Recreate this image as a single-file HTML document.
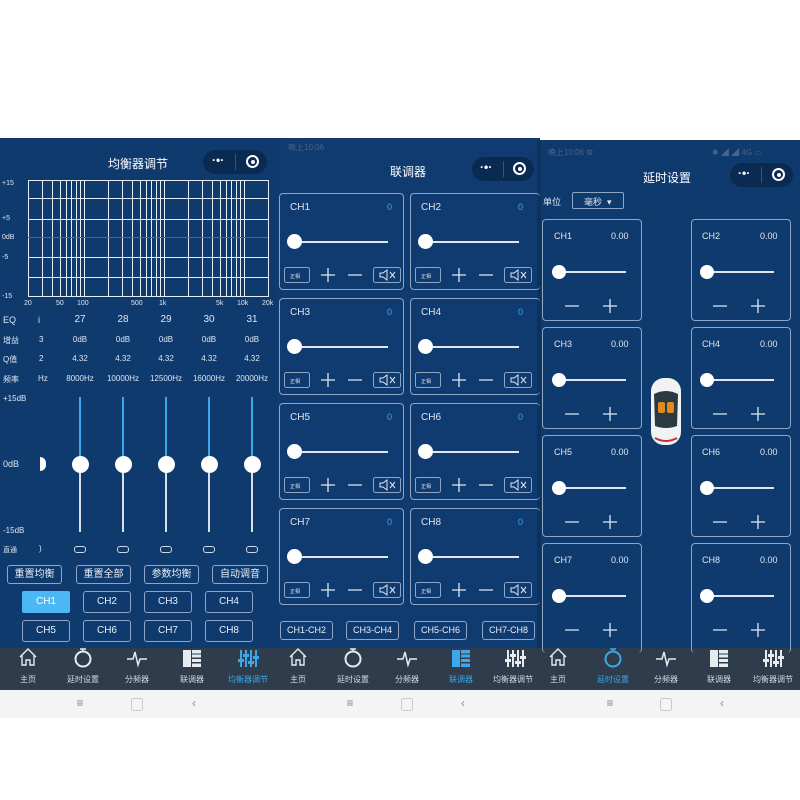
<!DOCTYPE html>
<html><head><meta charset="utf-8"><style>
*{margin:0;padding:0;box-sizing:border-box}
body{width:800px;height:800px;background:#fff;position:relative;overflow:hidden;font-family:"Liberation Sans","Noto Sans CJK SC",sans-serif;color:#e8eef6}
.a{position:absolute}
.bg{background:#0f3a6e}
.nav{background:#2e3c4b;height:42px;top:648px}
.sys{background:#f4f4f4;height:28px;top:690px}
.t{position:absolute;font-size:8px;color:#dfe6f0;white-space:nowrap}
.c{transform:translateX(-50%)}
.cap{position:absolute;background:#0a2a52;border-radius:12px;height:24px}
.bx{position:absolute;border:1px solid #8fa6c4;border-radius:4px}
.btn{position:absolute;border:1px solid #8fa6c4;border-radius:3px;font-size:10px;text-align:center;color:#e8eef6}
.trk{position:absolute;height:2px;background:#dfe6ee}
.knob{position:absolute;border-radius:50%;background:#fff}
.nl{position:absolute;font-size:8px;color:#d5dbe2;transform:translateX(-50%);top:674px;white-space:nowrap}
.sk{position:absolute;font-size:12px;color:#888;transform:translateX(-50%);top:696px}
</style></head><body>

<div class="a bg" style="left:0;top:138px;width:277px;height:510px"></div>
<div class="a bg" style="left:277px;top:138px;width:263px;height:510px;background:#103b70"></div>
<div class="a bg" style="left:540px;top:140px;width:260px;height:508px"></div>
<div class="a nav" style="left:0;width:800px"></div>
<div class="a sys" style="left:0;width:800px"></div>
<div class="a" style="left:537px;top:140px;width:4px;height:508px;background:#0c3260"></div>

<!-- PANEL 1 -->
<div class="t" style="left:108px;top:155px;font-size:12px;color:#fff">均衡器调节</div>
<div class="cap" style="left:203px;top:150px;width:64px"></div>
<div class="t" style="left:212px;top:153px;font-size:12px;color:#fff;font-weight:bold">·•·</div>
<div class="a" style="left:235px;top:154px;width:1px;height:16px;background:#34557e"></div>
<div class="a" style="left:246px;top:155px;width:13px;height:13px;border:2px solid #fff;border-radius:50%"><div class="a" style="left:2.5px;top:2.5px;width:4px;height:4px;background:#fff;border-radius:50%"></div></div>

<svg class="a" style="left:0;top:175px" width="277" height="135">
<g stroke="#e6ecf3" stroke-width="1" fill="none">
<rect x="28.5" y="5.5" width="240" height="116"/>
<line x1="28" y1="23.5" x2="268" y2="23.5"/><line x1="28" y1="44.5" x2="268" y2="44.5"/>
<line x1="28" y1="82.5" x2="268" y2="82.5"/><line x1="28" y1="102.5" x2="268" y2="102.5"/>
<line x1="42.5" y1="5" x2="42.5" y2="121"/><line x1="52.5" y1="5" x2="52.5" y2="121"/><line x1="60.5" y1="5" x2="60.5" y2="121"/><line x1="66.5" y1="5" x2="66.5" y2="121"/><line x1="71.5" y1="5" x2="71.5" y2="121"/><line x1="76.5" y1="5" x2="76.5" y2="121"/><line x1="80.5" y1="5" x2="80.5" y2="121"/><line x1="84.5" y1="5" x2="84.5" y2="121"/>
<line x1="108.5" y1="5" x2="108.5" y2="121"/><line x1="122.5" y1="5" x2="122.5" y2="121"/><line x1="132.5" y1="5" x2="132.5" y2="121"/><line x1="140.5" y1="5" x2="140.5" y2="121"/><line x1="146.5" y1="5" x2="146.5" y2="121"/><line x1="151.5" y1="5" x2="151.5" y2="121"/><line x1="156.5" y1="5" x2="156.5" y2="121"/><line x1="160.5" y1="5" x2="160.5" y2="121"/><line x1="164.5" y1="5" x2="164.5" y2="121"/>
<line x1="188.5" y1="5" x2="188.5" y2="121"/><line x1="202.5" y1="5" x2="202.5" y2="121"/><line x1="212.5" y1="5" x2="212.5" y2="121"/><line x1="220.5" y1="5" x2="220.5" y2="121"/><line x1="226.5" y1="5" x2="226.5" y2="121"/><line x1="231.5" y1="5" x2="231.5" y2="121"/><line x1="236.5" y1="5" x2="236.5" y2="121"/><line x1="240.5" y1="5" x2="240.5" y2="121"/><line x1="244.5" y1="5" x2="244.5" y2="121"/>
</g>
<line x1="28" y1="62.5" x2="268" y2="62.5" stroke="#d0343a" stroke-width="1"/>
<g fill="#dfe6f0" font-size="7" font-family="Liberation Sans">
<text x="2" y="10">+15</text><text x="2" y="45">+5</text><text x="2" y="64">0dB</text><text x="2" y="84">-5</text><text x="2" y="123">-15</text>
<text x="24" y="130">20</text><text x="56" y="130">50</text><text x="77" y="130">100</text><text x="131" y="130">500</text><text x="159" y="130">1k</text><text x="216" y="130">5k</text><text x="237" y="130">10k</text><text x="262" y="130">20k</text>
</g></svg>

<div class="t" style="left:3px;top:315px;font-size:9px">EQ</div>
<div class="t" style="left:38px;top:315px;font-size:9px">i</div>
<div class="t c" style="left:80px;top:314px;font-size:10px">27</div>
<div class="t c" style="left:123px;top:314px;font-size:10px">28</div>
<div class="t c" style="left:166px;top:314px;font-size:10px">29</div>
<div class="t c" style="left:209px;top:314px;font-size:10px">30</div>
<div class="t c" style="left:252px;top:314px;font-size:10px">31</div>
<div class="t" style="left:3px;top:335px">增益</div><div class="t" style="left:39px;top:335px">3</div>
<div class="t c" style="left:80px;top:335px">0dB</div><div class="t c" style="left:123px;top:335px">0dB</div><div class="t c" style="left:166px;top:335px">0dB</div><div class="t c" style="left:209px;top:335px">0dB</div><div class="t c" style="left:252px;top:335px">0dB</div>
<div class="t" style="left:3px;top:354px">Q值</div><div class="t" style="left:39px;top:354px">2</div>
<div class="t c" style="left:80px;top:354px">4.32</div><div class="t c" style="left:123px;top:354px">4.32</div><div class="t c" style="left:166px;top:354px">4.32</div><div class="t c" style="left:209px;top:354px">4.32</div><div class="t c" style="left:252px;top:354px">4.32</div>
<div class="t" style="left:3px;top:374px">频率</div><div class="t" style="left:38px;top:374px">Hz</div>
<div class="t c" style="left:80px;top:374px">8000Hz</div><div class="t c" style="left:123px;top:374px">10000Hz</div><div class="t c" style="left:166px;top:374px">12500Hz</div><div class="t c" style="left:209px;top:374px">16000Hz</div><div class="t c" style="left:252px;top:374px">20000Hz</div>

<div class="t" style="left:3px;top:394px">+15dB</div>
<div class="t" style="left:3px;top:459px;font-size:9px">0dB</div>
<div class="t" style="left:3px;top:526px">-15dB</div>
<div class="a" style="left:40px;top:457px;width:6px;height:14px;background:#fff;border-radius:0 7px 7px 0"></div>
<div class="a" style="left:79px;top:397px;width:2px;height:67px;background:#3aa8ea"></div><div class="a" style="left:79px;top:464px;width:2px;height:68px;background:#d8dfe8"></div><div class="knob" style="left:72px;top:456px;width:17px;height:17px"></div>
<div class="a" style="left:122px;top:397px;width:2px;height:67px;background:#3aa8ea"></div><div class="a" style="left:122px;top:464px;width:2px;height:68px;background:#d8dfe8"></div><div class="knob" style="left:115px;top:456px;width:17px;height:17px"></div>
<div class="a" style="left:165px;top:397px;width:2px;height:67px;background:#3aa8ea"></div><div class="a" style="left:165px;top:464px;width:2px;height:68px;background:#d8dfe8"></div><div class="knob" style="left:158px;top:456px;width:17px;height:17px"></div>
<div class="a" style="left:208px;top:397px;width:2px;height:67px;background:#3aa8ea"></div><div class="a" style="left:208px;top:464px;width:2px;height:68px;background:#d8dfe8"></div><div class="knob" style="left:201px;top:456px;width:17px;height:17px"></div>
<div class="a" style="left:251px;top:397px;width:2px;height:67px;background:#3aa8ea"></div><div class="a" style="left:251px;top:464px;width:2px;height:68px;background:#d8dfe8"></div><div class="knob" style="left:244px;top:456px;width:17px;height:17px"></div>

<div class="t" style="left:3px;top:545px;font-size:7px">直通</div>
<div class="t" style="left:39px;top:544px">)</div>
<div class="bx" style="left:74px;top:546px;width:12px;height:7px;border-radius:3px;border-color:#cfd8e4"></div>
<div class="bx" style="left:117px;top:546px;width:12px;height:7px;border-radius:3px;border-color:#cfd8e4"></div>
<div class="bx" style="left:160px;top:546px;width:12px;height:7px;border-radius:3px;border-color:#cfd8e4"></div>
<div class="bx" style="left:203px;top:546px;width:12px;height:7px;border-radius:3px;border-color:#cfd8e4"></div>
<div class="bx" style="left:246px;top:546px;width:12px;height:7px;border-radius:3px;border-color:#cfd8e4"></div>

<div class="btn" style="left:7px;top:565px;width:55px;height:19px;line-height:17px">重置均衡</div>
<div class="btn" style="left:76px;top:565px;width:55px;height:19px;line-height:17px">重置全部</div>
<div class="btn" style="left:144px;top:565px;width:55px;height:19px;line-height:17px">参数均衡</div>
<div class="btn" style="left:212px;top:565px;width:56px;height:19px;line-height:17px">自动调音</div>
<div class="btn" style="left:22px;top:591px;width:48px;height:22px;line-height:22px;background:#4cb7f2;border:none;color:#fff;border-radius:2px">CH1</div>
<div class="btn" style="left:83px;top:591px;width:48px;height:22px;line-height:20px">CH2</div>
<div class="btn" style="left:144px;top:591px;width:48px;height:22px;line-height:20px">CH3</div>
<div class="btn" style="left:205px;top:591px;width:48px;height:22px;line-height:20px">CH4</div>
<div class="btn" style="left:22px;top:620px;width:48px;height:22px;line-height:20px">CH5</div>
<div class="btn" style="left:83px;top:620px;width:48px;height:22px;line-height:20px">CH6</div>
<div class="btn" style="left:144px;top:620px;width:48px;height:22px;line-height:20px">CH7</div>
<div class="btn" style="left:205px;top:620px;width:48px;height:22px;line-height:20px">CH8</div>

<!-- PANEL 2 -->
<div class="t" style="left:288px;top:142px;color:#4a6488">晚上10:06</div>
<div class="t" style="left:390px;top:163px;font-size:12px;color:#fff">联调器</div>
<div class="cap" style="left:472px;top:157px;width:62px"></div>
<div class="t" style="left:480px;top:160px;font-size:12px;color:#fff;font-weight:bold">·•·</div>
<div class="a" style="left:503px;top:161px;width:1px;height:16px;background:#34557e"></div>
<div class="a" style="left:513px;top:162px;width:13px;height:13px;border:2px solid #fff;border-radius:50%"><div class="a" style="left:2.5px;top:2.5px;width:4px;height:4px;background:#fff;border-radius:50%"></div></div>

<div class="bx" style="left:279px;top:193px;width:125px;height:97px"></div>
<div class="bx" style="left:410px;top:193px;width:130px;height:97px;border-right:none"></div>
<div class="bx" style="left:279px;top:298px;width:125px;height:97px"></div>
<div class="bx" style="left:410px;top:298px;width:130px;height:97px;border-right:none"></div>
<div class="bx" style="left:279px;top:403px;width:125px;height:97px"></div>
<div class="bx" style="left:410px;top:403px;width:130px;height:97px;border-right:none"></div>
<div class="bx" style="left:279px;top:508px;width:125px;height:97px"></div>
<div class="bx" style="left:410px;top:508px;width:130px;height:97px;border-right:none"></div>

<div class="t" style="left:290px;top:202px;font-size:10px">CH1</div><div class="t" style="left:387px;top:202px;font-size:9px;color:#3aa8ea">0</div>
<div class="t" style="left:421px;top:202px;font-size:10px">CH2</div><div class="t" style="left:518px;top:202px;font-size:9px;color:#3aa8ea">0</div>
<div class="t" style="left:290px;top:307px;font-size:10px">CH3</div><div class="t" style="left:387px;top:307px;font-size:9px;color:#3aa8ea">0</div>
<div class="t" style="left:421px;top:307px;font-size:10px">CH4</div><div class="t" style="left:518px;top:307px;font-size:9px;color:#3aa8ea">0</div>
<div class="t" style="left:290px;top:412px;font-size:10px">CH5</div><div class="t" style="left:387px;top:412px;font-size:9px;color:#3aa8ea">0</div>
<div class="t" style="left:421px;top:412px;font-size:10px">CH6</div><div class="t" style="left:518px;top:412px;font-size:9px;color:#3aa8ea">0</div>
<div class="t" style="left:290px;top:517px;font-size:10px">CH7</div><div class="t" style="left:387px;top:517px;font-size:9px;color:#3aa8ea">0</div>
<div class="t" style="left:421px;top:517px;font-size:10px">CH8</div><div class="t" style="left:518px;top:517px;font-size:9px;color:#3aa8ea">0</div>

<div class="trk" style="left:295px;top:241px;width:93px"></div><div class="knob" style="left:287px;top:234px;width:15px;height:15px"></div>
<div class="trk" style="left:426px;top:241px;width:93px"></div><div class="knob" style="left:418px;top:234px;width:15px;height:15px"></div>
<div class="trk" style="left:295px;top:346px;width:93px"></div><div class="knob" style="left:287px;top:339px;width:15px;height:15px"></div>
<div class="trk" style="left:426px;top:346px;width:93px"></div><div class="knob" style="left:418px;top:339px;width:15px;height:15px"></div>
<div class="trk" style="left:295px;top:451px;width:93px"></div><div class="knob" style="left:287px;top:444px;width:15px;height:15px"></div>
<div class="trk" style="left:426px;top:451px;width:93px"></div><div class="knob" style="left:418px;top:444px;width:15px;height:15px"></div>
<div class="trk" style="left:295px;top:556px;width:93px"></div><div class="knob" style="left:287px;top:549px;width:15px;height:15px"></div>
<div class="trk" style="left:426px;top:556px;width:93px"></div><div class="knob" style="left:418px;top:549px;width:15px;height:15px"></div>

<svg class="a" style="left:277px;top:0" width="263" height="800">
<defs><g id="ctl" fill="none" stroke="#dfe6f0">
<rect x="7.5" y="0.5" width="25" height="15" rx="2" stroke="#8fa6c4"/>
<text x="13" y="11" font-size="5" fill="#dfe6f0" stroke="none" font-family="Noto Sans CJK SC">正相</text>
<path d="M44 8h14M51 1v14M71 8h14" stroke-width="1.3"/>
<rect x="96.5" y="0.5" width="27" height="15" rx="2" stroke="#8fa6c4"/>
<path d="M103 6h3l4-3v10l-4-3h-3zM113 5l5 6M118 5l-5 6" stroke-width="1"/>
</g></defs>
<use href="#ctl" x="0" y="267"/><use href="#ctl" x="131" y="267"/>
<use href="#ctl" x="0" y="372"/><use href="#ctl" x="131" y="372"/>
<use href="#ctl" x="0" y="477"/><use href="#ctl" x="131" y="477"/>
<use href="#ctl" x="0" y="582"/><use href="#ctl" x="131" y="582"/>
</svg>

<div class="btn" style="left:280px;top:621px;width:53px;height:19px;line-height:17px;font-size:9px">CH1-CH2</div>
<div class="btn" style="left:346px;top:621px;width:53px;height:19px;line-height:17px;font-size:9px">CH3-CH4</div>
<div class="btn" style="left:414px;top:621px;width:53px;height:19px;line-height:17px;font-size:9px">CH5-CH6</div>
<div class="btn" style="left:482px;top:621px;width:53px;height:19px;line-height:17px;font-size:9px">CH7-CH8</div>

<!-- PANEL 3 -->
<div class="t" style="left:548px;top:147px;color:#4a6488">晚上10:06 ⚙</div>
<div class="t" style="left:712px;top:147px;color:#4a6488">✱ ◢ ◢ 4G ▭</div>
<div class="t" style="left:643px;top:169px;font-size:12px;color:#fff">延时设置</div>
<div class="cap" style="left:730px;top:163px;width:63px"></div>
<div class="t" style="left:738px;top:166px;font-size:12px;color:#fff;font-weight:bold">·•·</div>
<div class="a" style="left:761px;top:167px;width:1px;height:16px;background:#34557e"></div>
<div class="a" style="left:772px;top:168px;width:13px;height:13px;border:2px solid #fff;border-radius:50%"><div class="a" style="left:2.5px;top:2.5px;width:4px;height:4px;background:#fff;border-radius:50%"></div></div>
<div class="t" style="left:543px;top:195px;font-size:9px">单位</div>
<div class="bx" style="left:572px;top:192px;width:52px;height:17px;border-radius:2px"></div>
<div class="t" style="left:584px;top:195px;font-size:9px">毫秒 &nbsp;▾</div>

<div class="bx" style="left:542px;top:219px;width:100px;height:102px"></div>
<div class="bx" style="left:691px;top:219px;width:100px;height:102px"></div>
<div class="bx" style="left:542px;top:327px;width:100px;height:102px"></div>
<div class="bx" style="left:691px;top:327px;width:100px;height:102px"></div>
<div class="bx" style="left:542px;top:435px;width:100px;height:102px"></div>
<div class="bx" style="left:691px;top:435px;width:100px;height:102px"></div>
<div class="bx" style="left:542px;top:543px;width:100px;height:110px;border-bottom:none"></div>
<div class="bx" style="left:691px;top:543px;width:100px;height:110px;border-bottom:none"></div>

<div class="t" style="left:554px;top:231px;font-size:9px">CH1</div><div class="t" style="left:611px;top:231px;font-size:9px">0.00</div>
<div class="t" style="left:702px;top:231px;font-size:9px">CH2</div><div class="t" style="left:760px;top:231px;font-size:9px">0.00</div>
<div class="t" style="left:554px;top:339px;font-size:9px">CH3</div><div class="t" style="left:611px;top:339px;font-size:9px">0.00</div>
<div class="t" style="left:702px;top:339px;font-size:9px">CH4</div><div class="t" style="left:760px;top:339px;font-size:9px">0.00</div>
<div class="t" style="left:554px;top:447px;font-size:9px">CH5</div><div class="t" style="left:611px;top:447px;font-size:9px">0.00</div>
<div class="t" style="left:702px;top:447px;font-size:9px">CH6</div><div class="t" style="left:760px;top:447px;font-size:9px">0.00</div>
<div class="t" style="left:554px;top:555px;font-size:9px">CH7</div><div class="t" style="left:611px;top:555px;font-size:9px">0.00</div>
<div class="t" style="left:702px;top:555px;font-size:9px">CH8</div><div class="t" style="left:760px;top:555px;font-size:9px">0.00</div>

<div class="trk" style="left:560px;top:271px;width:66px"></div><div class="knob" style="left:552px;top:265px;width:14px;height:14px"></div>
<div class="trk" style="left:708px;top:271px;width:66px"></div><div class="knob" style="left:700px;top:265px;width:14px;height:14px"></div>
<div class="trk" style="left:560px;top:379px;width:66px"></div><div class="knob" style="left:552px;top:373px;width:14px;height:14px"></div>
<div class="trk" style="left:708px;top:379px;width:66px"></div><div class="knob" style="left:700px;top:373px;width:14px;height:14px"></div>
<div class="trk" style="left:560px;top:487px;width:66px"></div><div class="knob" style="left:552px;top:481px;width:14px;height:14px"></div>
<div class="trk" style="left:708px;top:487px;width:66px"></div><div class="knob" style="left:700px;top:481px;width:14px;height:14px"></div>
<div class="trk" style="left:560px;top:595px;width:66px"></div><div class="knob" style="left:552px;top:589px;width:14px;height:14px"></div>
<div class="trk" style="left:708px;top:595px;width:66px"></div><div class="knob" style="left:700px;top:589px;width:14px;height:14px"></div>

<svg class="a" style="left:540px;top:0" width="260" height="800">
<defs><g id="pm" fill="none" stroke="#dfe6f0" stroke-width="1.3"><path d="M25 0h14M63 0h14M70 -7v14"/></g></defs>
<use href="#pm" y="306"/><use href="#pm" x="148" y="306"/>
<use href="#pm" y="414"/><use href="#pm" x="148" y="414"/>
<use href="#pm" y="522"/><use href="#pm" x="148" y="522"/>
<use href="#pm" y="630"/><use href="#pm" x="148" y="630"/>
<g transform="translate(110,378)">
<rect x="1" y="0" width="30" height="67" rx="13" fill="#f1f2f4"/>
<path d="M4 16 Q16 10 28 16 L27 48 Q16 52 5 48Z" fill="#2b3a40"/>
<rect x="8" y="24" width="7" height="11" rx="2" fill="#e08a1f"/><rect x="17" y="24" width="7" height="11" rx="2" fill="#e08a1f"/>
<path d="M5 60 Q16 66 27 60" stroke="#c0303a" stroke-width="2" fill="none"/>
</g>
</svg>

<!-- NAV ICONS -->
<svg class="a" style="left:0;top:648px" width="800" height="42">
<defs>
<g id="home" fill="none" stroke-width="1.4"><path d="M-8 6 L0 -2 L8 6 M-6 4 V14 H-2 V9 H2 V14 H6 V4" transform="translate(0,3)"/></g>
<g id="timer" fill="none" stroke-width="2"><circle cx="0" cy="11" r="7.5"/><path d="M-3 1h6M0 1v2" stroke-width="1.5"/></g>
<g id="wave" fill="none" stroke-width="1.5"><path d="M-10 11h6l2-7 3 13 2-6h7"/></g>
<g id="grid" stroke="none"><rect x="-9" y="2" width="8" height="17"/><rect x="0" y="2" width="9" height="3.5"/><rect x="0" y="6.5" width="9" height="3"/><rect x="0" y="11" width="9" height="3"/><rect x="0" y="15.5" width="9" height="3.5"/></g>
<g id="eq" stroke="none"><rect x="-8" y="2" width="2" height="17"/><rect x="-10" y="11" width="6" height="3"/><rect x="-3" y="2" width="2" height="17"/><rect x="-5" y="6" width="6" height="3"/><rect x="2" y="2" width="2" height="17"/><rect x="0" y="13" width="6" height="3"/><rect x="7" y="2" width="2" height="17"/><rect x="5" y="8" width="6" height="3"/></g>
</defs>
<g stroke="#e6ebf0" fill="#e6ebf0">
<use href="#home" x="28"/><use href="#timer" x="83"/><use href="#wave" x="137"/><use href="#grid" x="192"/>
<use href="#home" x="298"/><use href="#timer" x="353"/><use href="#wave" x="407"/><use href="#eq" x="515"/>
<use href="#home" x="558"/><use href="#wave" x="666"/><use href="#grid" x="719"/><use href="#eq" x="773"/>
</g>
<g stroke="#3aa8ea" fill="#3aa8ea">
<use href="#eq" x="248"/><use href="#grid" x="461"/><use href="#timer" x="613"/>
</g>
</svg>
<div class="nl" style="left:28px">主页</div><div class="nl" style="left:83px">延时设置</div><div class="nl" style="left:137px">分频器</div><div class="nl" style="left:192px">联调器</div><div class="nl" style="left:248px;color:#3aa8ea">均衡器调节</div>
<div class="nl" style="left:298px">主页</div><div class="nl" style="left:353px">延时设置</div><div class="nl" style="left:407px">分频器</div><div class="nl" style="left:461px;color:#3aa8ea">联调器</div><div class="nl" style="left:513px">均衡器调节</div>
<div class="nl" style="left:558px">主页</div><div class="nl" style="left:613px;color:#3aa8ea">延时设置</div><div class="nl" style="left:666px">分频器</div><div class="nl" style="left:719px">联调器</div><div class="nl" style="left:773px">均衡器调节</div>

<div class="sk" style="left:80px">≡</div><div class="sk" style="left:137px">▢</div><div class="sk" style="left:194px">‹</div>
<div class="sk" style="left:350px">≡</div><div class="sk" style="left:407px">▢</div><div class="sk" style="left:463px">‹</div>
<div class="sk" style="left:610px">≡</div><div class="sk" style="left:666px">▢</div><div class="sk" style="left:722px">‹</div>
</body></html>
